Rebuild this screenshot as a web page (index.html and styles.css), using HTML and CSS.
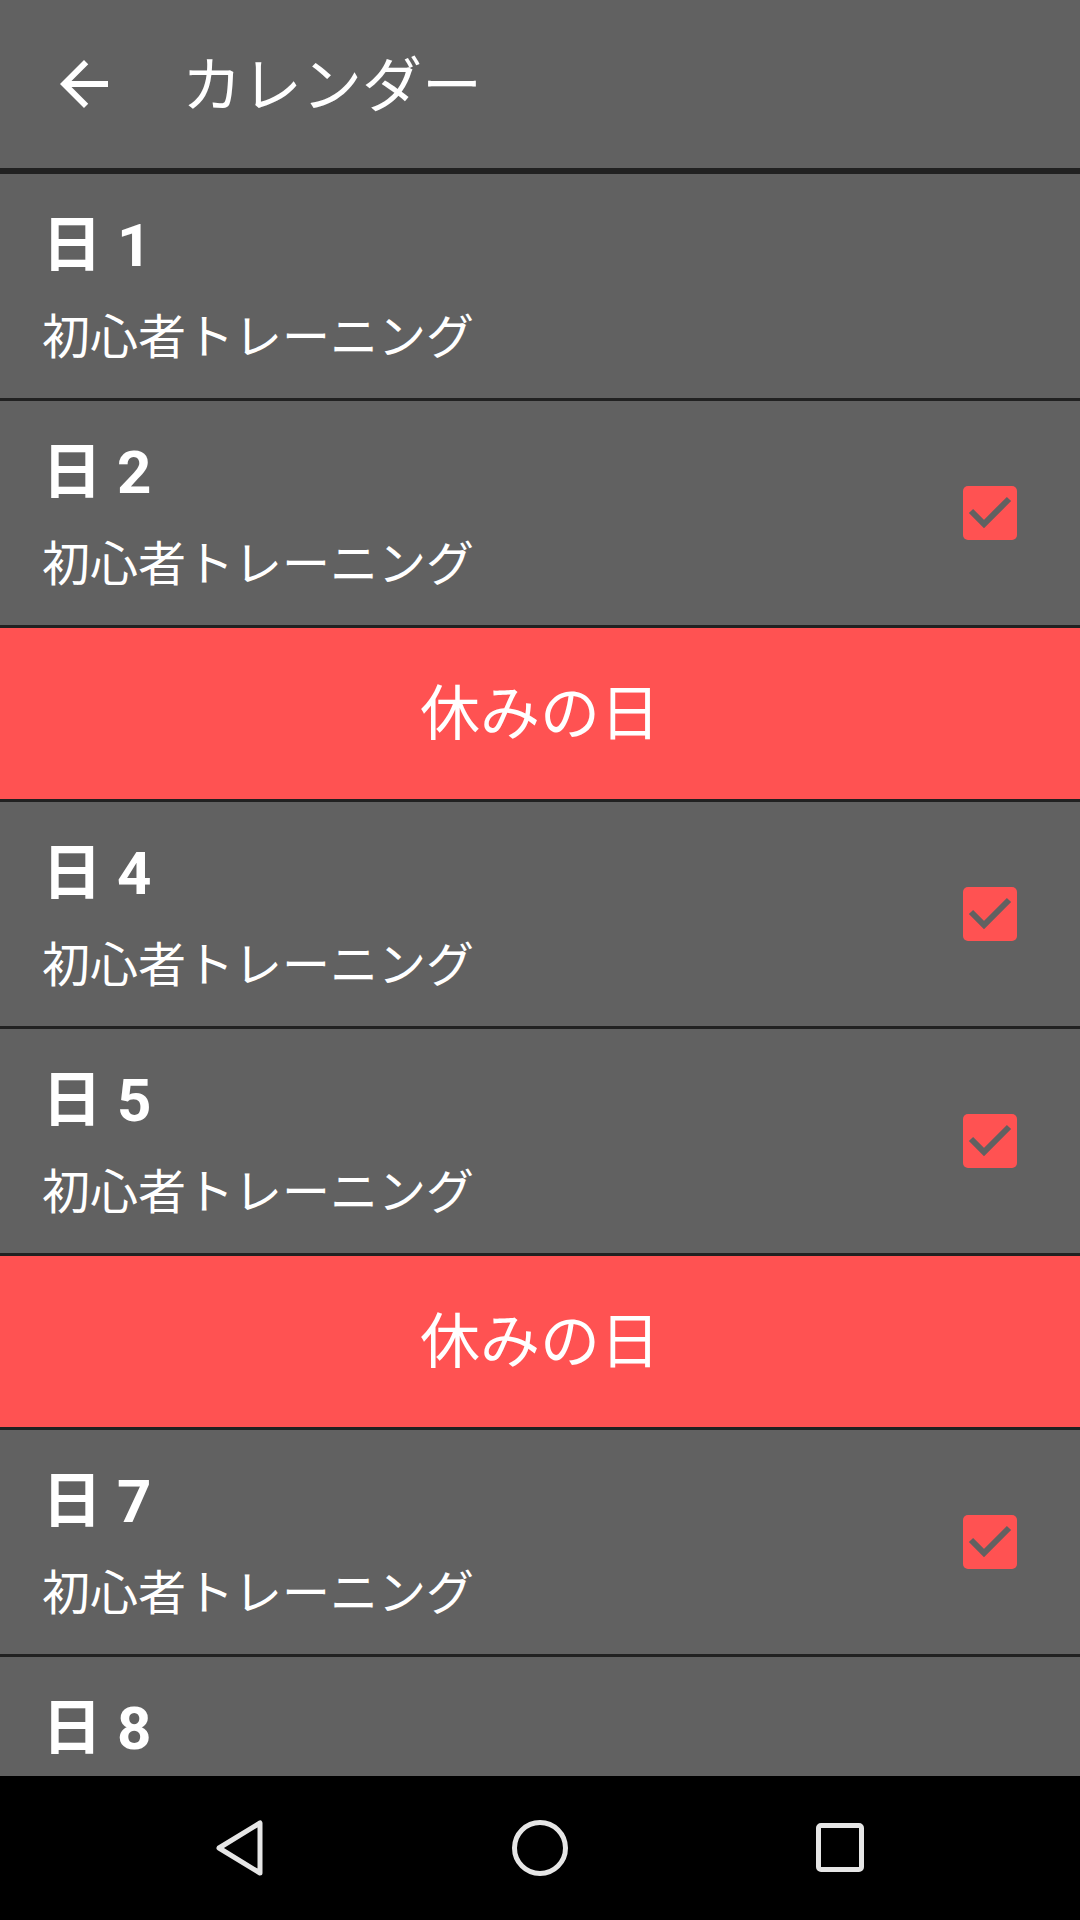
FILE: index.html
```html
<!DOCTYPE html>
<html lang="ja">
  <head>
    <meta charset="UTF-8" />
    <meta name="viewport" content="width=device-width, initial-scale=1.0" />
    <title>カレンダー</title>
    <link rel="stylesheet" href="styles.css">
  </head>
  <body>
    <div class="app">
      <header class="toolbar">
        <svg class="back-icon" viewBox="0 0 24 24" width="72" height="72">
          <path d="M20 11H7.83l5.59-5.59L12 4l-8 8 8 8 1.41-1.41L7.83 13H20v-2z" fill="#fff"/>
        </svg>
        <span class="toolbar-title">カレンダー</span>
      </header>

      <div class="day-list">
        <div class="day-row">
          <div class="day-text">
            <div class="day-name">日 1</div>
            <div class="day-plan">初心者トレーニング</div>
          </div>
        </div>
        <div class="day-row">
          <div class="day-text">
            <div class="day-name">日 2</div>
            <div class="day-plan">初心者トレーニング</div>
          </div>
          <svg class="check" viewBox="0 0 54 54" width="54" height="54">
            <rect width="54" height="54" rx="5" fill="#ff5252"/>
            <polyline points="8,25 21,38 46,13" fill="none" stroke="#616161" stroke-width="6"/>
          </svg>
        </div>
        <div class="rest-row">休みの日</div>
        <div class="day-row">
          <div class="day-text">
            <div class="day-name">日 4</div>
            <div class="day-plan">初心者トレーニング</div>
          </div>
          <svg class="check" viewBox="0 0 54 54" width="54" height="54">
            <rect width="54" height="54" rx="5" fill="#ff5252"/>
            <polyline points="8,25 21,38 46,13" fill="none" stroke="#616161" stroke-width="6"/>
          </svg>
        </div>
        <div class="day-row">
          <div class="day-text">
            <div class="day-name">日 5</div>
            <div class="day-plan">初心者トレーニング</div>
          </div>
          <svg class="check" viewBox="0 0 54 54" width="54" height="54">
            <rect width="54" height="54" rx="5" fill="#ff5252"/>
            <polyline points="8,25 21,38 46,13" fill="none" stroke="#616161" stroke-width="6"/>
          </svg>
        </div>
        <div class="rest-row">休みの日</div>
        <div class="day-row">
          <div class="day-text">
            <div class="day-name">日 7</div>
            <div class="day-plan">初心者トレーニング</div>
          </div>
          <svg class="check" viewBox="0 0 54 54" width="54" height="54">
            <rect width="54" height="54" rx="5" fill="#ff5252"/>
            <polyline points="8,25 21,38 46,13" fill="none" stroke="#616161" stroke-width="6"/>
          </svg>
        </div>
        <!-- last row runs under the nav bar, only its title shows -->
        <div class="day-row">
          <div class="day-text">
            <div class="day-name">日 8</div>
          </div>
        </div>
      </div>

      <nav class="nav-bar">
        <svg viewBox="0 0 72 72" width="72" height="72">
          <path d="M15 36 L56 11 L56 61 Z" fill="none" stroke="#e6e6e6" stroke-width="5" stroke-linejoin="round"/>
        </svg>
        <svg viewBox="0 0 72 72" width="72" height="72">
          <circle cx="36" cy="36" r="25.5" fill="none" stroke="#e6e6e6" stroke-width="5"/>
        </svg>
        <svg viewBox="0 0 72 72" width="72" height="72">
          <rect x="14.5" y="13.5" width="43" height="44" rx="2.5" fill="none" stroke="#e6e6e6" stroke-width="5"/>
        </svg>
      </nav>
    </div>
  </body>
</html>
```

FILE: styles.css
```css
body {
  margin: 0;
  font-family: Roboto, "Noto Sans CJK JP", sans-serif;
  color: #fff;
  background-color: #000;
}

.app {
  width: 1080px;
  height: 1920px;
  display: flex;
  flex-direction: column;
  overflow: hidden;
}

.toolbar {
  height: 168px;
  flex-shrink: 0;
  display: flex;
  align-items: center;
  background-color: #616161;
  border-bottom: 6px solid #212121;
}

.back-icon {
  margin-left: 48px;
  flex-shrink: 0;
}

.toolbar-title {
  margin-left: 62px;
  padding-top: 6px;
  font-size: 60px;
  line-height: 72px;
}

.day-list {
  flex: 1;
  overflow: hidden;
  background-color: #616161;
}

/* 188 + 36 top padding = 224px row */
.day-row {
  height: 188px;
  display: flex;
  align-items: flex-start;
  justify-content: space-between;
  padding: 36px 63px 0 42px;
  background-color: #616161;
  border-bottom: 3px solid #212121;
}

.day-text {
  display: flex;
  flex-direction: column;
  gap: 26px;
}

.day-name {
  font-size: 60px;
  font-weight: bold;
  line-height: 72px;
}

.day-plan {
  font-size: 48px;
  line-height: 60px;
}

.check {
  flex-shrink: 0;
  align-self: center;
  margin-top: -36px;
}

.rest-row {
  height: 161px;
  padding-bottom: 10px;
  display: flex;
  align-items: center;
  justify-content: center;
  font-size: 60px;
  background-color: #ff5252;
  border-bottom: 3px solid #212121;
}

.nav-bar {
  height: 144px;
  flex-shrink: 0;
  display: flex;
  align-items: center;
  justify-content: center;
  gap: 228px;
  background-color: #000;
}
```
